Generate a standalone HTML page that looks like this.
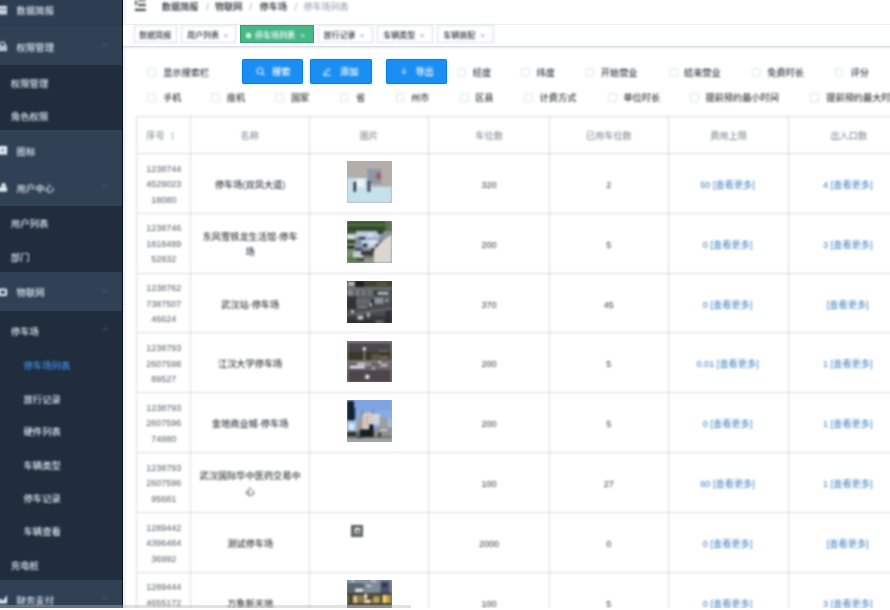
<!DOCTYPE html>
<html lang="zh-CN"><head><meta charset="utf-8"><title>停车场列表</title>
<style>
html,body{margin:0;padding:0}
body{width:890px;height:610px;overflow:hidden;position:relative;background:#fff;font-family:"Liberation Sans","Noto Sans CJK SC",sans-serif;-webkit-font-smoothing:antialiased}
#page{position:absolute;left:-14px;top:-14px;width:918px;height:638px;overflow:hidden;background:#fff}
#in{position:absolute;left:14px;top:14px;width:890px;height:610px}
.t{position:absolute;white-space:nowrap;margin:0;padding:0;filter:blur(1px)}
.s1{filter:blur(.85px)}
.s2{filter:blur(.95px)}
.s0{filter:blur(.3px)}
.b{position:absolute;box-sizing:border-box}
svg{position:absolute;overflow:visible}
a{color:inherit;text-decoration:none}
</style></head><body><div id="page"><div id="in">
<div class="b " style="left:-14.00px;top:-14.00px;width:137.00px;height:638.00px;background:#304156"></div>
<div class="b " style="left:-14.00px;top:-14.00px;width:137.00px;height:39.30px;background:#2d3d52"></div>
<div class="b " style="left:-14.00px;top:25.00px;width:137.00px;height:0.80px;background:#29384b"></div>
<div class="b " style="left:-14.00px;top:64.60px;width:137.00px;height:65.60px;background:#1f2d3d"></div>
<div class="b " style="left:-14.00px;top:206.00px;width:137.00px;height:66.30px;background:#1f2d3d"></div>
<div class="b " style="left:-14.00px;top:310.80px;width:137.00px;height:269.70px;background:#1f2d3d"></div>
<div class="b " style="left:121.90px;top:-14.00px;width:1.10px;height:638.00px;background:#0b1017"></div>
<div class="b " style="left:123.00px;top:-14.00px;width:2.60px;height:638.00px;background:#f1f4f9"></div>
<svg class="s1" style="left:-2.4px;top:5.5px" width="9.1" height="8.6"><rect x="0" y="0" width="9.1" height="2.6" fill="#e4ecf6"/><rect x="0" y="3.4" width="9.1" height="5.2" fill="#e4ecf6" opacity=".85"/></svg>
<div class="t" style="left:16.60px;top:5.30px;line-height:12px;height:12px;font-size:9.4px;color:#dde5ee;font-weight:500">数据简报</div>
<svg class="s1" style="left:-2.4px;top:41.9px" width="9.1" height="8.6"><path d="M2 4 V2.4 A2.5 2.4 0 0 1 7 2.4 V4" fill="none" stroke="#e4ecf6" stroke-width="1.2"/><rect x="0" y="3.8" width="9.1" height="5" fill="#e4ecf6"/><rect x="0" y="5.6" width="9.1" height="0.8" fill="#304156"/></svg>
<div class="t" style="left:16.60px;top:41.70px;line-height:12px;height:12px;font-size:9.4px;color:#dde5ee;font-weight:500">权限管理</div>
<svg class="s1" style="left:104.8px;top:45.1px" width="1" height="1"><path d="M-2.7 1.5 L0 -1.4 L2.7 1.5" fill="none" stroke="#5d6b80" stroke-width="0.8"/></svg>
<div class="t" style="left:10.80px;top:77.80px;line-height:12px;height:12px;font-size:9.4px;color:#dde5ee;font-weight:500">权限管理</div>
<div class="t" style="left:10.80px;top:110.80px;line-height:12px;height:12px;font-size:9.4px;color:#dde5ee;font-weight:500">角色权限</div>
<svg class="s1" style="left:-2.4px;top:146.4px" width="9.1" height="8.6"><rect x="0" y="0" width="9.1" height="8.6" fill="#e4ecf6"/><rect x="3" y="3" width="3" height="2.6" fill="#304156" opacity=".5"/></svg>
<div class="t" style="left:16.60px;top:146.20px;line-height:12px;height:12px;font-size:9.4px;color:#dde5ee;font-weight:500">图标</div>
<svg class="s1" style="left:-2.4px;top:183.2px" width="9.1" height="8.6"><circle cx="5.6" cy="2.3" r="2.3" fill="#e4ecf6"/><rect x="0.5" y="4.2" width="8.6" height="4.4" fill="#e4ecf6"/></svg>
<div class="t" style="left:16.60px;top:183.00px;line-height:12px;height:12px;font-size:9.4px;color:#dde5ee;font-weight:500">用户中心</div>
<svg class="s1" style="left:104.8px;top:186.4px" width="1" height="1"><path d="M-2.7 1.5 L0 -1.4 L2.7 1.5" fill="none" stroke="#5d6b80" stroke-width="0.8"/></svg>
<div class="t" style="left:10.80px;top:218.00px;line-height:12px;height:12px;font-size:9.4px;color:#dde5ee;font-weight:500">用户列表</div>
<div class="t" style="left:10.80px;top:252.00px;line-height:12px;height:12px;font-size:9.4px;color:#dde5ee;font-weight:500">部门</div>
<svg class="s1" style="left:-2.4px;top:287.6px" width="9.1" height="8.6"><rect x="0" y="0.6" width="9.1" height="7.4" rx="1.5" fill="#e4ecf6"/><rect x="2.6" y="2.6" width="4.4" height="3.2" fill="#304156"/></svg>
<div class="t" style="left:16.60px;top:287.40px;line-height:12px;height:12px;font-size:9.4px;color:#dde5ee;font-weight:500">物联网</div>
<svg class="s1" style="left:104.8px;top:290.8px" width="1" height="1"><path d="M-2.7 1.5 L0 -1.4 L2.7 1.5" fill="none" stroke="#5d6b80" stroke-width="0.8"/></svg>
<div class="t" style="left:10.80px;top:325.50px;line-height:12px;height:12px;font-size:9.4px;color:#dde5ee;font-weight:500">停车场</div>
<svg class="s1" style="left:104.8px;top:328.9px" width="1" height="1"><path d="M-2.7 1.5 L0 -1.4 L2.7 1.5" fill="none" stroke="#5d6b80" stroke-width="0.8"/></svg>
<div class="t" style="left:23.40px;top:359.50px;line-height:12px;height:12px;font-size:9.4px;color:#3a8ee6;font-weight:500">停车场列表</div>
<div class="t" style="left:23.40px;top:393.50px;line-height:12px;height:12px;font-size:9.4px;color:#dde5ee;font-weight:500">放行记录</div>
<div class="t" style="left:23.40px;top:426.30px;line-height:12px;height:12px;font-size:9.4px;color:#dde5ee;font-weight:500">硬件列表</div>
<div class="t" style="left:23.40px;top:459.70px;line-height:12px;height:12px;font-size:9.4px;color:#dde5ee;font-weight:500">车辆类型</div>
<div class="t" style="left:23.40px;top:493.20px;line-height:12px;height:12px;font-size:9.4px;color:#dde5ee;font-weight:500">停车记录</div>
<div class="t" style="left:23.40px;top:526.40px;line-height:12px;height:12px;font-size:9.4px;color:#dde5ee;font-weight:500">车辆查看</div>
<div class="t" style="left:10.80px;top:560.40px;line-height:12px;height:12px;font-size:9.4px;color:#dde5ee;font-weight:500">充电桩</div>
<svg class="s1" style="left:-2.4px;top:594.8px" width="9.1" height="8.6"><path d="M0 8.6 L2 3 L5 6 L9 0 L9.1 8.6 Z" fill="#e4ecf6"/></svg>
<div class="t" style="left:16.60px;top:594.60px;line-height:12px;height:12px;font-size:9.4px;color:#dde5ee;font-weight:500">财务支付</div>
<svg class="s1" style="left:104.8px;top:598.0px" width="1" height="1"><path d="M-2.7 -1.5 L0 1.4 L2.7 -1.5" fill="none" stroke="#5d6b80" stroke-width="0.8"/></svg>
<svg class="s1" style="left:135.0px;top:-1.4px" width="10.8" height="12.4"><g fill="#2a2c30"><rect x="3.0" y="0.6" width="7.8" height="1.8" fill="#6a6c70"/><rect x="3.0" y="5.2" width="7.8" height="1.8"/><rect x="0" y="9.9" width="10.8" height="1.9"/><path d="M0 0.4 L2.7 3.8 L0 7.2 Z" fill="#55575b"/></g></svg>
<div class="t" style="left:161.80px;top:1.20px;line-height:12px;height:12px;font-size:9.2px;color:#1d2024;font-weight:500">数据简报</div>
<div class="t" style="left:206.30px;top:1.20px;line-height:12px;height:12px;font-size:9.2px;color:#9ba1ab;font-weight:500">/</div>
<div class="t" style="left:215.00px;top:1.20px;line-height:12px;height:12px;font-size:9.2px;color:#1d2024;font-weight:500">物联网</div>
<div class="t" style="left:249.60px;top:1.20px;line-height:12px;height:12px;font-size:9.2px;color:#9ba1ab;font-weight:500">/</div>
<div class="t" style="left:259.60px;top:1.20px;line-height:12px;height:12px;font-size:9.2px;color:#1d2024;font-weight:500">停车场</div>
<div class="t" style="left:294.70px;top:1.20px;line-height:12px;height:12px;font-size:9.2px;color:#9ba1ab;font-weight:500">/</div>
<div class="t" style="left:303.50px;top:1.20px;line-height:12px;height:12px;font-size:9.0px;color:#9ea9b9;font-weight:500">停车场列表</div>
<div class="b " style="left:123.00px;top:23.60px;width:781.00px;height:23.00px;background:#fff;border-top:1px solid #eceef2;border-bottom:1px solid #d8dce5;box-shadow:0 1px 2px rgba(0,0,0,.10)"></div>
<div class="b s1" style="left:133.90px;top:25.10px;width:43.40px;height:17.90px;background:#fff;border:1px solid #d8dce3"></div>
<div class="t" style="left:139.20px;top:31.10px;line-height:10px;height:10px;font-size:8.0px;color:#343a47;font-weight:500">数据简报</div>
<div class="b s1" style="left:180.60px;top:25.10px;width:55.90px;height:17.90px;background:#fff;border:1px solid #d8dce3"></div>
<div class="t" style="left:187.00px;top:31.10px;line-height:10px;height:10px;font-size:8.0px;color:#343a47;font-weight:500">用户列表</div>
<div class="t" style="left:223.70px;top:31.10px;line-height:10px;height:10px;font-size:7.5px;color:#8a919f;font-weight:500">×</div>
<div class="b s0" style="left:239.80px;top:25.10px;width:74.20px;height:17.90px;background:#45b886;border:1px solid #37a173"></div>
<div class="b s1" style="left:245.80px;top:32.60px;width:5.00px;height:5.60px;background:#d2f9e6;border-radius:1.2px"></div>
<div class="t" style="left:255.00px;top:31.10px;line-height:10px;height:10px;font-size:8.0px;color:#fff;font-weight:500">停车场列表</div>
<div class="t" style="left:300.40px;top:31.10px;line-height:10px;height:10px;font-size:7.5px;color:#fff;font-weight:500">×</div>
<div class="b s1" style="left:318.10px;top:25.10px;width:54.90px;height:17.90px;background:#fff;border:1px solid #d8dce3"></div>
<div class="t" style="left:323.60px;top:31.10px;line-height:10px;height:10px;font-size:8.0px;color:#343a47;font-weight:500">放行记录</div>
<div class="t" style="left:360.10px;top:31.10px;line-height:10px;height:10px;font-size:7.5px;color:#8a919f;font-weight:500">×</div>
<div class="b s1" style="left:376.80px;top:25.10px;width:56.10px;height:17.90px;background:#fff;border:1px solid #d8dce3"></div>
<div class="t" style="left:383.20px;top:31.10px;line-height:10px;height:10px;font-size:8.0px;color:#343a47;font-weight:500">车辆类型</div>
<div class="t" style="left:419.90px;top:31.10px;line-height:10px;height:10px;font-size:7.5px;color:#8a919f;font-weight:500">×</div>
<div class="b s1" style="left:437.30px;top:25.10px;width:56.40px;height:17.90px;background:#fff;border:1px solid #d8dce3"></div>
<div class="t" style="left:443.20px;top:31.10px;line-height:10px;height:10px;font-size:8.0px;color:#343a47;font-weight:500">车辆装配</div>
<div class="t" style="left:480.40px;top:31.10px;line-height:10px;height:10px;font-size:7.5px;color:#8a919f;font-weight:500">×</div>
<div class="b s1" style="left:146.90px;top:68.10px;width:8.80px;height:8.80px;border:1px solid #dde0e6;border-radius:1.3px;background:#fff"></div>
<div class="t" style="left:163.20px;top:66.50px;line-height:12px;height:12px;font-size:9.2px;color:#3f4146;font-weight:500">显示搜索栏</div>
<div class="b s0" style="left:242.10px;top:59.20px;width:61.20px;height:24.90px;background:#1b8ef4;border-radius:2px;box-shadow:inset 0 0 0 1px rgba(0,70,160,.28),0 0 0 1.6px rgba(205,245,255,.55)"></div>
<div class="t" style="left:272.00px;top:65.90px;line-height:12px;height:12px;font-size:9.2px;color:#fff;font-weight:500">搜索</div>
<svg class="s1" style="left:255.8px;top:67.2px" width="9" height="9"><circle cx="3.9" cy="3.9" r="3.1" fill="none" stroke="#fff" stroke-width="1"/><path d="M6.1 6.1 L8.4 8.4" stroke="#fff" stroke-width="1.1"/></svg>
<div class="b s0" style="left:310.20px;top:59.20px;width:61.60px;height:24.90px;background:#1b8ef4;border-radius:2px;box-shadow:inset 0 0 0 1px rgba(0,70,160,.28),0 0 0 1.6px rgba(205,245,255,.55)"></div>
<div class="t" style="left:340.00px;top:65.90px;line-height:12px;height:12px;font-size:9.2px;color:#fff;font-weight:500">添加</div>
<svg class="s1" style="left:323.4px;top:67.2px" width="9" height="9"><path d="M1 6.2 L5.6 1.2 L7 2.6 L2.4 7.4 L0.8 7.6 Z" fill="none" stroke="#fff" stroke-width="0.9"/><path d="M0.4 8.5 H7.6" stroke="#fff" stroke-width="0.9"/></svg>
<div class="b s0" style="left:386.20px;top:59.20px;width:60.80px;height:24.90px;background:#1b8ef4;border-radius:2px;box-shadow:inset 0 0 0 1px rgba(0,70,160,.28),0 0 0 1.6px rgba(205,245,255,.55)"></div>
<div class="t" style="left:415.40px;top:65.90px;line-height:12px;height:12px;font-size:9.2px;color:#fff;font-weight:500">导出</div>
<svg class="s1" style="left:400.8px;top:67.2px" width="9" height="9"><path d="M3 0.8 V6.6 M0.6 4.4 L3 6.8 L5.4 4.4" fill="none" stroke="#fff" stroke-width="0.9"/></svg>
<div class="b s1" style="left:457.60px;top:68.10px;width:8.80px;height:8.80px;border:1px solid #dde0e6;border-radius:1.3px;background:#fff"></div>
<div class="t" style="left:472.80px;top:66.50px;line-height:12px;height:12px;font-size:9.2px;color:#3f4146;font-weight:500">经度</div>
<div class="b s1" style="left:521.30px;top:68.10px;width:8.80px;height:8.80px;border:1px solid #dde0e6;border-radius:1.3px;background:#fff"></div>
<div class="t" style="left:536.60px;top:66.50px;line-height:12px;height:12px;font-size:9.2px;color:#3f4146;font-weight:500">纬度</div>
<div class="b s1" style="left:585.60px;top:68.10px;width:8.80px;height:8.80px;border:1px solid #dde0e6;border-radius:1.3px;background:#fff"></div>
<div class="t" style="left:600.80px;top:66.50px;line-height:12px;height:12px;font-size:9.2px;color:#3f4146;font-weight:500">开始营业</div>
<div class="b s1" style="left:668.90px;top:68.10px;width:8.80px;height:8.80px;border:1px solid #dde0e6;border-radius:1.3px;background:#fff"></div>
<div class="t" style="left:684.00px;top:66.50px;line-height:12px;height:12px;font-size:9.2px;color:#3f4146;font-weight:500">结束营业</div>
<div class="b s1" style="left:752.10px;top:68.10px;width:8.80px;height:8.80px;border:1px solid #dde0e6;border-radius:1.3px;background:#fff"></div>
<div class="t" style="left:767.30px;top:66.50px;line-height:12px;height:12px;font-size:9.2px;color:#3f4146;font-weight:500">免费时长</div>
<div class="b s1" style="left:834.50px;top:68.10px;width:8.80px;height:8.80px;border:1px solid #dde0e6;border-radius:1.3px;background:#fff"></div>
<div class="t" style="left:850.60px;top:66.50px;line-height:12px;height:12px;font-size:9.2px;color:#3f4146;font-weight:500">评分</div>
<div class="b s1" style="left:146.90px;top:93.10px;width:8.80px;height:8.80px;border:1px solid #dde0e6;border-radius:1.3px;background:#fff"></div>
<div class="t" style="left:163.20px;top:91.50px;line-height:12px;height:12px;font-size:9.2px;color:#3f4146;font-weight:500">手机</div>
<div class="b s1" style="left:211.10px;top:93.10px;width:8.80px;height:8.80px;border:1px solid #dde0e6;border-radius:1.3px;background:#fff"></div>
<div class="t" style="left:226.80px;top:91.50px;line-height:12px;height:12px;font-size:9.2px;color:#3f4146;font-weight:500">座机</div>
<div class="b s1" style="left:274.80px;top:93.10px;width:8.80px;height:8.80px;border:1px solid #dde0e6;border-radius:1.3px;background:#fff"></div>
<div class="t" style="left:290.90px;top:91.50px;line-height:12px;height:12px;font-size:9.2px;color:#3f4146;font-weight:500">国家</div>
<div class="b s1" style="left:339.70px;top:93.10px;width:8.80px;height:8.80px;border:1px solid #dde0e6;border-radius:1.3px;background:#fff"></div>
<div class="t" style="left:356.00px;top:91.50px;line-height:12px;height:12px;font-size:9.2px;color:#3f4146;font-weight:500">省</div>
<div class="b s1" style="left:395.70px;top:93.10px;width:8.80px;height:8.80px;border:1px solid #dde0e6;border-radius:1.3px;background:#fff"></div>
<div class="t" style="left:410.90px;top:91.50px;line-height:12px;height:12px;font-size:9.2px;color:#3f4146;font-weight:500">州市</div>
<div class="b s1" style="left:460.00px;top:93.10px;width:8.80px;height:8.80px;border:1px solid #dde0e6;border-radius:1.3px;background:#fff"></div>
<div class="t" style="left:475.20px;top:91.50px;line-height:12px;height:12px;font-size:9.2px;color:#3f4146;font-weight:500">区县</div>
<div class="b s1" style="left:524.30px;top:93.10px;width:8.80px;height:8.80px;border:1px solid #dde0e6;border-radius:1.3px;background:#fff"></div>
<div class="t" style="left:539.60px;top:91.50px;line-height:12px;height:12px;font-size:9.2px;color:#3f4146;font-weight:500">计费方式</div>
<div class="b s1" style="left:608.10px;top:93.10px;width:8.80px;height:8.80px;border:1px solid #dde0e6;border-radius:1.3px;background:#fff"></div>
<div class="t" style="left:623.40px;top:91.50px;line-height:12px;height:12px;font-size:9.2px;color:#3f4146;font-weight:500">单位时长</div>
<div class="b s1" style="left:689.90px;top:93.10px;width:8.80px;height:8.80px;border:1px solid #dde0e6;border-radius:1.3px;background:#fff"></div>
<div class="t" style="left:705.40px;top:91.50px;line-height:12px;height:12px;font-size:9.2px;color:#3f4146;font-weight:500">提前预约最小时间</div>
<div class="b s1" style="left:810.30px;top:93.10px;width:8.80px;height:8.80px;border:1px solid #dde0e6;border-radius:1.3px;background:#fff"></div>
<div class="t" style="left:826.30px;top:91.50px;line-height:12px;height:12px;font-size:9.2px;color:#3f4146;font-weight:500">提前预约最大时间</div>
<div class="b s2" style="left:136.70px;top:115.60px;width:767.30px;height:1.00px;background:#dbdcdf"></div>
<div class="b s2" style="left:136.70px;top:153.00px;width:767.30px;height:1.00px;background:#dbdcdf"></div>
<div class="b s2" style="left:136.70px;top:212.83px;width:767.30px;height:1.00px;background:#dbdcdf"></div>
<div class="b s2" style="left:136.70px;top:272.66px;width:767.30px;height:1.00px;background:#dbdcdf"></div>
<div class="b s2" style="left:136.70px;top:332.49px;width:767.30px;height:1.00px;background:#dbdcdf"></div>
<div class="b s2" style="left:136.70px;top:392.32px;width:767.30px;height:1.00px;background:#dbdcdf"></div>
<div class="b s2" style="left:136.70px;top:452.15px;width:767.30px;height:1.00px;background:#dbdcdf"></div>
<div class="b s2" style="left:136.70px;top:511.98px;width:767.30px;height:1.00px;background:#dbdcdf"></div>
<div class="b s2" style="left:136.70px;top:571.81px;width:767.30px;height:1.00px;background:#dbdcdf"></div>
<div class="b s2" style="left:136.20px;top:116.10px;width:1.00px;height:507.90px;background:#dbdcdf"></div>
<div class="b s2" style="left:189.60px;top:116.10px;width:1.00px;height:507.90px;background:#dbdcdf"></div>
<div class="b s2" style="left:308.70px;top:116.10px;width:1.00px;height:507.90px;background:#dbdcdf"></div>
<div class="b s2" style="left:428.30px;top:116.10px;width:1.00px;height:507.90px;background:#dbdcdf"></div>
<div class="b s2" style="left:548.90px;top:116.10px;width:1.00px;height:507.90px;background:#dbdcdf"></div>
<div class="b s2" style="left:667.70px;top:116.10px;width:1.00px;height:507.90px;background:#dbdcdf"></div>
<div class="b s2" style="left:788.40px;top:116.10px;width:1.00px;height:507.90px;background:#dbdcdf"></div>
<div class="t" style="left:146.30px;top:129.60px;line-height:12px;height:12px;font-size:9.2px;color:#909399;font-weight:500">序号</div>
<svg class="s1" style="left:170.4px;top:130.6px" width="5" height="10"><path d="M0.4 3.9 L2.5 1 L4.6 3.9 Z M0.4 6.1 L2.5 9 L4.6 6.1 Z" fill="#c0c4cc"/></svg>
<div class="t" style="left:149.65px;width:200px;text-align:center;top:129.60px;line-height:12px;height:12px;font-size:9.2px;color:#909399;font-weight:500">名称</div>
<div class="t" style="left:269.00px;width:200px;text-align:center;top:129.60px;line-height:12px;height:12px;font-size:9.2px;color:#909399;font-weight:500">图片</div>
<div class="t" style="left:389.10px;width:200px;text-align:center;top:129.60px;line-height:12px;height:12px;font-size:9.2px;color:#909399;font-weight:500">车位数</div>
<div class="t" style="left:508.80px;width:200px;text-align:center;top:129.60px;line-height:12px;height:12px;font-size:9.2px;color:#909399;font-weight:500">已用车位数</div>
<div class="t" style="left:628.55px;width:200px;text-align:center;top:129.60px;line-height:12px;height:12px;font-size:9.2px;color:#909399;font-weight:500">费用上限</div>
<div class="t" style="left:748.75px;width:200px;text-align:center;top:129.60px;line-height:12px;height:12px;font-size:9.2px;color:#909399;font-weight:500">出入口数</div>
<div class="t" style="left:133.80px;width:60px;text-align:center;top:162.66px;line-height:12px;height:12px;font-size:9.0px;color:#585b62;font-weight:500">1238744</div>
<div class="t" style="left:133.80px;width:60px;text-align:center;top:178.11px;line-height:12px;height:12px;font-size:9.0px;color:#585b62;font-weight:500">4529023</div>
<div class="t" style="left:133.80px;width:60px;text-align:center;top:193.56px;line-height:12px;height:12px;font-size:9.0px;color:#585b62;font-weight:500">18080</div>
<div class="t" style="left:185.15px;width:130px;text-align:center;top:178.91px;line-height:12px;height:12px;font-size:9.2px;color:#3f4146;font-weight:500">停车场(双凤大道)</div>
<svg style="left:347.3px;top:161.1px;overflow:hidden" width="44.6" height="41.8" viewBox="0 0 44 42" preserveAspectRatio="none"><g style="filter:blur(.9px)"><rect x="-6" y="-6" width="56" height="54" fill="#b3aeaa"/><rect width="44" height="42" fill="#b3aeaa"/><path d="M0 17 H24 V26 H44 V42 H0 Z" fill="#c6e0ee"/><rect x="20" y="8" width="14" height="15" fill="#8d97a6"/><rect x="29" y="12" width="4" height="6" fill="#b4505a"/><rect x="10" y="18" width="7" height="8" fill="#eef3f6"/><rect x="6.5" y="21" width="2.4" height="10" fill="#2a2a33"/><rect x="20" y="20" width="3.2" height="11" fill="#4a4c5c"/></g></svg>
<div class="t" style="left:389.10px;width:200px;text-align:center;top:178.91px;line-height:12px;height:12px;font-size:9.0px;color:#3f4146;font-weight:500">320</div>
<div class="t" style="left:508.80px;width:200px;text-align:center;top:178.91px;line-height:12px;height:12px;font-size:9.0px;color:#3f4146;font-weight:500">2</div>
<div class="t" style="left:627.55px;width:200px;text-align:center;top:178.91px;line-height:12px;height:12px;font-size:9.2px;color:#3a7ebf;font-weight:400"><a>50 [查看更多]</a></div>
<div class="t" style="left:747.75px;width:200px;text-align:center;top:178.91px;line-height:12px;height:12px;font-size:9.2px;color:#3a7ebf;font-weight:400"><a>4 [查看更多]</a></div>
<div class="t" style="left:133.80px;width:60px;text-align:center;top:222.49px;line-height:12px;height:12px;font-size:9.0px;color:#585b62;font-weight:500">1238746</div>
<div class="t" style="left:133.80px;width:60px;text-align:center;top:237.94px;line-height:12px;height:12px;font-size:9.0px;color:#585b62;font-weight:500">1818489</div>
<div class="t" style="left:133.80px;width:60px;text-align:center;top:253.39px;line-height:12px;height:12px;font-size:9.0px;color:#585b62;font-weight:500">52832</div>
<div class="t" style="left:185.15px;width:130px;text-align:center;top:231.02px;line-height:12px;height:12px;font-size:9.2px;color:#3f4146;font-weight:500">东风雪铁龙生活馆-停车</div>
<div class="t" style="left:185.15px;width:130px;text-align:center;top:246.47px;line-height:12px;height:12px;font-size:9.2px;color:#3f4146;font-weight:500">场</div>
<svg style="left:347.3px;top:220.9px;overflow:hidden" width="44.6" height="41.8" viewBox="0 0 44 42" preserveAspectRatio="none"><g style="filter:blur(.9px)"><rect x="-6" y="-6" width="56" height="54" fill="#8d96a0"/><rect width="44" height="42" fill="#8d96a0"/><rect width="44" height="11" fill="#2f4928"/><rect y="2" width="40" height="3.4" fill="#4f6c3c"/><rect x="38" y="0" width="6" height="10" fill="#5b7350"/><rect x="0" y="10" width="9" height="3" fill="#4b5a48"/><rect x="9" y="10" width="21" height="3" fill="#b7c2d2"/><rect x="30" y="10" width="6" height="3" fill="#33482e"/><rect x="36" y="10" width="8" height="4" fill="#8f948f"/><rect x="0" y="13" width="7" height="3" fill="#cfd3d4"/><rect x="7" y="13" width="25" height="3" fill="#c3d0e3"/><rect x="21" y="13" width="4" height="2.4" fill="#eef2f8"/><rect x="32" y="13" width="7" height="3" fill="#8c97a8"/><rect x="0" y="16" width="8" height="2.4" fill="#e6e9e4"/><rect x="8" y="16" width="5" height="3" fill="#8b949c"/><rect x="12" y="16" width="6" height="2.4" fill="#27303c"/><rect x="18" y="16" width="14" height="3" fill="#9fb0cc"/><rect x="32" y="16" width="5" height="3" fill="#8a8f96"/><rect x="0" y="18.4" width="8" height="4.6" fill="#394a2e"/><rect x="8" y="19" width="6" height="4" fill="#7f8a92"/><rect x="14" y="19" width="17" height="4" fill="#c0cde4"/><rect x="22" y="20" width="7" height="3" fill="#e4eaf4"/><rect x="31" y="19" width="3.6" height="4" fill="#7a7f86"/><rect x="0" y="23" width="8" height="2.4" fill="#9aa890"/><rect x="0" y="25" width="7.4" height="2.2" fill="#0c0f0c"/><rect x="8" y="23" width="8" height="4" fill="#8995a6"/><rect x="16" y="23" width="4.4" height="2.6" fill="#1a2230"/><rect x="20" y="23" width="8" height="4" fill="#c5cfdf"/><rect x="28" y="23" width="3" height="4" fill="#4c5058"/><rect x="0" y="27.2" width="8" height="3" fill="#6e8266"/><rect x="8" y="27" width="7" height="3" fill="#3b4c5c"/><rect x="15" y="27" width="9" height="3" fill="#8d939c"/><rect x="24" y="27" width="3" height="3" fill="#33363a"/><rect x="0" y="30" width="6" height="4" fill="#7a9070"/><rect x="6" y="30" width="8" height="4" fill="#c1c9cc"/><rect x="14" y="30" width="12" height="4.4" fill="#3a3833"/><rect x="0" y="34" width="6" height="3" fill="#6f8a62"/><rect x="6" y="34.4" width="10" height="1.8" fill="#e0e6e2"/><rect x="16" y="34.4" width="10" height="2.6" fill="#6b675f"/><rect x="0" y="37" width="10" height="5" fill="#587548"/><rect x="10" y="37.4" width="7" height="2.6" fill="#2c4426"/><rect x="17" y="37" width="9" height="5" fill="#8c9688"/><rect x="0" y="40" width="17" height="2" fill="#6b8560"/><path d="M44 14 L40 16 L35.4 20 L31.7 24 L27.9 27.6 L26.6 31 V42 H44 Z" fill="#dcd6d0"/></g></svg>
<div class="t" style="left:389.10px;width:200px;text-align:center;top:238.74px;line-height:12px;height:12px;font-size:9.0px;color:#3f4146;font-weight:500">200</div>
<div class="t" style="left:508.80px;width:200px;text-align:center;top:238.74px;line-height:12px;height:12px;font-size:9.0px;color:#3f4146;font-weight:500">5</div>
<div class="t" style="left:627.55px;width:200px;text-align:center;top:238.74px;line-height:12px;height:12px;font-size:9.2px;color:#3a7ebf;font-weight:400"><a>0 [查看更多]</a></div>
<div class="t" style="left:747.75px;width:200px;text-align:center;top:238.74px;line-height:12px;height:12px;font-size:9.2px;color:#3a7ebf;font-weight:400"><a>3 [查看更多]</a></div>
<div class="t" style="left:133.80px;width:60px;text-align:center;top:282.32px;line-height:12px;height:12px;font-size:9.0px;color:#585b62;font-weight:500">1238762</div>
<div class="t" style="left:133.80px;width:60px;text-align:center;top:297.77px;line-height:12px;height:12px;font-size:9.0px;color:#585b62;font-weight:500">7387507</div>
<div class="t" style="left:133.80px;width:60px;text-align:center;top:313.22px;line-height:12px;height:12px;font-size:9.0px;color:#585b62;font-weight:500">46624</div>
<div class="t" style="left:185.15px;width:130px;text-align:center;top:298.57px;line-height:12px;height:12px;font-size:9.2px;color:#3f4146;font-weight:500">武汉站-停车场</div>
<svg style="left:347.3px;top:280.8px;overflow:hidden" width="44.6" height="41.8" viewBox="0 0 44 42" preserveAspectRatio="none"><g style="filter:blur(.9px)"><rect x="-6" y="-6" width="56" height="54" fill="#4a4d50"/><rect width="44" height="42" fill="#4a4d50"/><rect x="0" y="0" width="8" height="6" fill="#787b7f"/><rect x="1.6" y="1.8" width="5.6" height="2.2" fill="#dcdcdc"/><rect x="8" y="0" width="9" height="6" fill="#1c1e20"/><rect x="17" y="0" width="27" height="6" fill="#3e4230"/><rect x="29" y="1.4" width="11" height="3" fill="#585d44"/><rect x="0" y="6" width="44" height="3" fill="#6a6e72"/><rect x="0" y="9" width="6" height="6" fill="#83878b"/><rect x="6" y="9" width="21" height="6" fill="#5f6367"/><rect x="9" y="9" width="2.6" height="6" fill="#7d8185"/><rect x="15" y="9" width="2.6" height="6" fill="#7a7e82"/><rect x="21" y="9" width="2.6" height="6" fill="#74787c"/><rect x="27" y="9" width="3" height="6" fill="#34363a"/><rect x="30" y="11" width="11" height="2.6" fill="#b4bac2"/><rect x="0" y="15" width="10" height="3" fill="#393b3e"/><rect x="10" y="15" width="34" height="3" fill="#585c60"/><rect x="0" y="18" width="9" height="6" fill="#2e3032"/><rect x="9" y="18" width="15" height="6" fill="#63676b"/><rect x="24" y="18" width="3" height="7" fill="#2a2c2e"/><rect x="27" y="17" width="9" height="6" fill="#8a929b"/><rect x="38" y="18.4" width="3" height="2.4" fill="#aab0b6"/><rect x="22.6" y="22.8" width="2.2" height="2.2" fill="#e2e2e2"/><rect x="0" y="24" width="9" height="4" fill="#303234"/><rect x="10" y="25" width="10" height="2.2" fill="#7a7e82"/><path d="M0 33.4 L44 27 V28.4 L0 34.8 Z" fill="#6b7074"/><rect x="4" y="29.4" width="2.6" height="2.6" fill="#d6d6d6"/><rect x="0" y="35" width="44" height="7" fill="#383b3e"/><rect x="10.5" y="34.8" width="5.4" height="4" fill="#c0c2c4"/><rect x="19.6" y="31.8" width="3" height="4.6" fill="#a6a9ac"/><rect x="38" y="30" width="6" height="10" fill="#2f3134"/><rect x="0" y="40.4" width="44" height="1.6" fill="#1e2022"/><rect x="28" y="40" width="8" height="1.6" fill="#8a8c8e"/></g></svg>
<div class="t" style="left:389.10px;width:200px;text-align:center;top:298.57px;line-height:12px;height:12px;font-size:9.0px;color:#3f4146;font-weight:500">370</div>
<div class="t" style="left:508.80px;width:200px;text-align:center;top:298.57px;line-height:12px;height:12px;font-size:9.0px;color:#3f4146;font-weight:500">45</div>
<div class="t" style="left:627.55px;width:200px;text-align:center;top:298.57px;line-height:12px;height:12px;font-size:9.2px;color:#3a7ebf;font-weight:400"><a>0 [查看更多]</a></div>
<div class="t" style="left:747.75px;width:200px;text-align:center;top:298.57px;line-height:12px;height:12px;font-size:9.2px;color:#3a7ebf;font-weight:400"><a>[查看更多]</a></div>
<div class="t" style="left:133.80px;width:60px;text-align:center;top:342.15px;line-height:12px;height:12px;font-size:9.0px;color:#585b62;font-weight:500">1238793</div>
<div class="t" style="left:133.80px;width:60px;text-align:center;top:357.60px;line-height:12px;height:12px;font-size:9.0px;color:#585b62;font-weight:500">2607598</div>
<div class="t" style="left:133.80px;width:60px;text-align:center;top:373.05px;line-height:12px;height:12px;font-size:9.0px;color:#585b62;font-weight:500">89527</div>
<div class="t" style="left:185.15px;width:130px;text-align:center;top:358.40px;line-height:12px;height:12px;font-size:9.2px;color:#3f4146;font-weight:500">江汉大学停车场</div>
<svg style="left:347.3px;top:340.6px;overflow:hidden" width="44.6" height="41.8" viewBox="0 0 44 42" preserveAspectRatio="none"><g style="filter:blur(.9px)"><rect x="-6" y="-6" width="56" height="54" fill="#4c474c"/><rect width="44" height="42" fill="#4c474c"/><rect y="0" width="44" height="2" fill="#7e7c80"/><rect x="31" y="9" width="10" height="2.4" fill="#68655e"/><rect y="11" width="44" height="8.6" fill="#3a3826"/><rect x="24" y="13" width="9" height="6" fill="#5a5844"/><rect x="33" y="15" width="8" height="3.4" fill="#6e6b5c"/><rect x="16.2" y="9" width="1.9" height="11" fill="#7c7e76"/><rect x="15.6" y="6.4" width="3" height="2.8" fill="#f6f6f6"/><rect y="19.6" width="44" height="1.6" fill="#8c888c"/><rect y="21.2" width="44" height="8" fill="#6c666c"/><rect x="10" y="22" width="8" height="2" fill="#e6e4e8"/><rect x="18" y="22" width="6" height="3" fill="#9a949a"/><rect x="3" y="25" width="14.6" height="2.4" fill="#f0eef2"/><rect x="31" y="20.4" width="2.6" height="1.8" fill="#f0f0f0"/><rect x="33" y="22.6" width="7" height="3.4" fill="#b4aeb6"/><rect x="24.5" y="26" width="3.2" height="3" fill="#b8aa88"/><rect y="29.2" width="44" height="12.8" fill="#4d474d"/><rect x="18" y="34" width="4" height="4" fill="#e2e2e2"/><rect x="0" y="0" width="44" height="42" fill="none" stroke="#8a888c" stroke-width="1.4"/></g></svg>
<div class="t" style="left:389.10px;width:200px;text-align:center;top:358.40px;line-height:12px;height:12px;font-size:9.0px;color:#3f4146;font-weight:500">200</div>
<div class="t" style="left:508.80px;width:200px;text-align:center;top:358.40px;line-height:12px;height:12px;font-size:9.0px;color:#3f4146;font-weight:500">5</div>
<div class="t" style="left:627.55px;width:200px;text-align:center;top:358.40px;line-height:12px;height:12px;font-size:9.2px;color:#3a7ebf;font-weight:400"><a>0.01 [查看更多]</a></div>
<div class="t" style="left:747.75px;width:200px;text-align:center;top:358.40px;line-height:12px;height:12px;font-size:9.2px;color:#3a7ebf;font-weight:400"><a>1 [查看更多]</a></div>
<div class="t" style="left:133.80px;width:60px;text-align:center;top:401.99px;line-height:12px;height:12px;font-size:9.0px;color:#585b62;font-weight:500">1238793</div>
<div class="t" style="left:133.80px;width:60px;text-align:center;top:417.44px;line-height:12px;height:12px;font-size:9.0px;color:#585b62;font-weight:500">2607596</div>
<div class="t" style="left:133.80px;width:60px;text-align:center;top:432.88px;line-height:12px;height:12px;font-size:9.0px;color:#585b62;font-weight:500">74880</div>
<div class="t" style="left:185.15px;width:130px;text-align:center;top:418.24px;line-height:12px;height:12px;font-size:9.2px;color:#3f4146;font-weight:500">金地商业城-停车场</div>
<svg style="left:347.3px;top:400.4px;overflow:hidden" width="44.6" height="41.8" viewBox="0 0 44 42" preserveAspectRatio="none"><g style="filter:blur(.9px)"><rect x="-6" y="-6" width="56" height="54" fill="#8aabe2"/><rect width="44" height="42" fill="#8aabe2"/><rect y="0" width="44" height="10" fill="#7fa3e0"/><rect y="18" width="44" height="8" fill="#9bb9e6"/><rect x="0" y="1" width="7" height="19.4" fill="#14202c"/><rect x="7" y="8" width="1.4" height="12" fill="#2a456a"/><rect x="0.6" y="21.6" width="8" height="10" fill="#a8c4de"/><rect x="2" y="24" width="5" height="5.4" fill="#dfeaf4"/><rect x="14" y="10.6" width="2.6" height="6" fill="#6e86a4"/><rect x="24.4" y="10.6" width="2" height="6" fill="#7088a6"/><rect x="10" y="18" width="6" height="15" fill="#a09c96"/><rect x="15.4" y="13" width="10" height="16" fill="#d8ccc4"/><rect x="18" y="16" width="3" height="10" fill="#cdb9ae"/><rect x="25.4" y="14" width="7" height="10.4" fill="#d5d3da"/><rect x="32" y="17.6" width="8" height="15" fill="#9e9e9e"/><rect x="40" y="24" width="4" height="10" fill="#b5b7ba"/><rect x="0" y="31.6" width="44" height="10.4" fill="#6e7270"/><rect x="0" y="32" width="9" height="4.4" fill="#2a3432"/><rect x="12.6" y="29.6" width="13.6" height="7.4" fill="#1c1e1c"/><rect x="22" y="24.6" width="4" height="6" fill="#141414"/><rect x="27" y="27.6" width="17" height="8.4" fill="#8e9092"/><rect x="33" y="29" width="7" height="2.2" fill="#c8cbcd"/><rect x="31" y="33" width="2.4" height="4" fill="#2c2e2e"/><rect x="10" y="36.4" width="6" height="3" fill="#3a3c3a"/><rect x="0" y="38.4" width="44" height="3.6" fill="#a2a6a6"/></g></svg>
<div class="t" style="left:389.10px;width:200px;text-align:center;top:418.24px;line-height:12px;height:12px;font-size:9.0px;color:#3f4146;font-weight:500">200</div>
<div class="t" style="left:508.80px;width:200px;text-align:center;top:418.24px;line-height:12px;height:12px;font-size:9.0px;color:#3f4146;font-weight:500">5</div>
<div class="t" style="left:627.55px;width:200px;text-align:center;top:418.24px;line-height:12px;height:12px;font-size:9.2px;color:#3a7ebf;font-weight:400"><a>0 [查看更多]</a></div>
<div class="t" style="left:747.75px;width:200px;text-align:center;top:418.24px;line-height:12px;height:12px;font-size:9.2px;color:#3a7ebf;font-weight:400"><a>1 [查看更多]</a></div>
<div class="t" style="left:133.80px;width:60px;text-align:center;top:461.81px;line-height:12px;height:12px;font-size:9.0px;color:#585b62;font-weight:500">1238793</div>
<div class="t" style="left:133.80px;width:60px;text-align:center;top:477.26px;line-height:12px;height:12px;font-size:9.0px;color:#585b62;font-weight:500">2607596</div>
<div class="t" style="left:133.80px;width:60px;text-align:center;top:492.71px;line-height:12px;height:12px;font-size:9.0px;color:#585b62;font-weight:500">95681</div>
<div class="t" style="left:185.15px;width:130px;text-align:center;top:470.34px;line-height:12px;height:12px;font-size:9.2px;color:#3f4146;font-weight:500">武汉国际华中医药交易中</div>
<div class="t" style="left:185.15px;width:130px;text-align:center;top:485.79px;line-height:12px;height:12px;font-size:9.2px;color:#3f4146;font-weight:500">心</div>
<div class="t" style="left:389.10px;width:200px;text-align:center;top:478.06px;line-height:12px;height:12px;font-size:9.0px;color:#3f4146;font-weight:500">100</div>
<div class="t" style="left:508.80px;width:200px;text-align:center;top:478.06px;line-height:12px;height:12px;font-size:9.0px;color:#3f4146;font-weight:500">27</div>
<div class="t" style="left:627.55px;width:200px;text-align:center;top:478.06px;line-height:12px;height:12px;font-size:9.2px;color:#3a7ebf;font-weight:400"><a>60 [查看更多]</a></div>
<div class="t" style="left:747.75px;width:200px;text-align:center;top:478.06px;line-height:12px;height:12px;font-size:9.2px;color:#3a7ebf;font-weight:400"><a>1 [查看更多]</a></div>
<div class="t" style="left:133.80px;width:60px;text-align:center;top:521.64px;line-height:12px;height:12px;font-size:9.0px;color:#585b62;font-weight:500">1289442</div>
<div class="t" style="left:133.80px;width:60px;text-align:center;top:537.10px;line-height:12px;height:12px;font-size:9.0px;color:#585b62;font-weight:500">4396484</div>
<div class="t" style="left:133.80px;width:60px;text-align:center;top:552.55px;line-height:12px;height:12px;font-size:9.0px;color:#585b62;font-weight:500">36992</div>
<div class="t" style="left:185.15px;width:130px;text-align:center;top:537.89px;line-height:12px;height:12px;font-size:9.2px;color:#3f4146;font-weight:500">测试停车场</div>
<div class="b s1" style="left:351.40px;top:524.88px;width:11.80px;height:11.80px;background:#6d6f73;border:1px solid #55575b"></div>
<div class="b s1" style="left:354.60px;top:527.88px;width:5.20px;height:5.40px;background:#f0f0f0"></div>
<div class="b s1" style="left:356.00px;top:530.08px;width:3.80px;height:3.20px;background:#6d6f73"></div>
<div class="t" style="left:389.10px;width:200px;text-align:center;top:537.89px;line-height:12px;height:12px;font-size:9.0px;color:#3f4146;font-weight:500">2000</div>
<div class="t" style="left:508.80px;width:200px;text-align:center;top:537.89px;line-height:12px;height:12px;font-size:9.0px;color:#3f4146;font-weight:500">0</div>
<div class="t" style="left:627.55px;width:200px;text-align:center;top:537.89px;line-height:12px;height:12px;font-size:9.2px;color:#3a7ebf;font-weight:400"><a>0 [查看更多]</a></div>
<div class="t" style="left:747.75px;width:200px;text-align:center;top:537.89px;line-height:12px;height:12px;font-size:9.2px;color:#3a7ebf;font-weight:400"><a>[查看更多]</a></div>
<div class="t" style="left:133.80px;width:60px;text-align:center;top:581.47px;line-height:12px;height:12px;font-size:9.0px;color:#585b62;font-weight:500">1289444</div>
<div class="t" style="left:133.80px;width:60px;text-align:center;top:596.92px;line-height:12px;height:12px;font-size:9.0px;color:#585b62;font-weight:500">4655172</div>
<div class="t" style="left:133.80px;width:60px;text-align:center;top:612.38px;line-height:12px;height:12px;font-size:9.0px;color:#585b62;font-weight:500">31104</div>
<div class="t" style="left:185.15px;width:130px;text-align:center;top:597.72px;line-height:12px;height:12px;font-size:9.2px;color:#3f4146;font-weight:500">万象新天地</div>
<svg style="left:347.3px;top:579.9px;overflow:hidden" width="44.6" height="41.8" viewBox="0 0 44 42" preserveAspectRatio="none"><g style="filter:blur(.9px)"><rect x="-6" y="-6" width="56" height="54" fill="#7a8794"/><rect width="44" height="42" fill="#7a8794"/><rect y="0" width="44" height="3" fill="#8c98a6"/><rect x="0" y="3" width="17" height="10" fill="#586672"/><rect x="4" y="0" width="3" height="2" fill="#cfd5dc"/><rect x="24" y="0" width="5" height="2.4" fill="#d4dae0"/><rect x="17" y="2" width="16" height="11" fill="#7e8b98"/><rect x="19" y="5" width="5" height="1.8" fill="#c9d0d8"/><rect x="33" y="1" width="9" height="12" fill="#4d5070"/><rect x="35" y="4" width="4" height="2.4" fill="#1c1e3a"/><rect x="8" y="8.6" width="8" height="3.4" fill="#dfe4ea"/><rect x="0" y="13" width="44" height="2" fill="#3c3a30"/><rect y="15" width="44" height="9" fill="#7c6a3c"/><rect x="2" y="15" width="4" height="8" fill="#4a4230"/><rect x="6" y="16" width="4" height="7" fill="#d6c58e"/><rect x="10" y="16" width="6" height="6" fill="#8b7a52"/><rect x="17" y="14" width="3" height="5" fill="#e8e4d6"/><rect x="20" y="16" width="6" height="3" fill="#4a4428"/><rect x="17" y="20" width="6" height="3" fill="#f4ecc8"/><rect x="26" y="17" width="6" height="6" fill="#b8a468"/><rect x="33" y="15" width="2" height="8" fill="#3a3424"/><rect x="35" y="15" width="4" height="8.4" fill="#ecd48a"/><rect x="39" y="15" width="3.4" height="8.4" fill="#c8a63c"/><rect y="23.4" width="44" height="2" fill="#3a3830"/><rect y="25.4" width="44" height="17" fill="#77746a"/></g></svg>
<div class="t" style="left:389.10px;width:200px;text-align:center;top:597.72px;line-height:12px;height:12px;font-size:9.0px;color:#3f4146;font-weight:500">100</div>
<div class="t" style="left:508.80px;width:200px;text-align:center;top:597.72px;line-height:12px;height:12px;font-size:9.0px;color:#3f4146;font-weight:500">5</div>
<div class="t" style="left:627.55px;width:200px;text-align:center;top:597.72px;line-height:12px;height:12px;font-size:9.2px;color:#3a7ebf;font-weight:400"><a>0 [查看更多]</a></div>
<div class="t" style="left:747.75px;width:200px;text-align:center;top:597.72px;line-height:12px;height:12px;font-size:9.2px;color:#3a7ebf;font-weight:400"><a>3 [查看更多]</a></div>
<div class="b " style="left:-14.00px;top:604.80px;width:425.00px;height:3.00px;background:rgba(178,180,184,.42)"></div>
<div class="b " style="left:-14.00px;top:607.80px;width:918.00px;height:20.00px;background:#fff"></div>
</div></div></body></html>
